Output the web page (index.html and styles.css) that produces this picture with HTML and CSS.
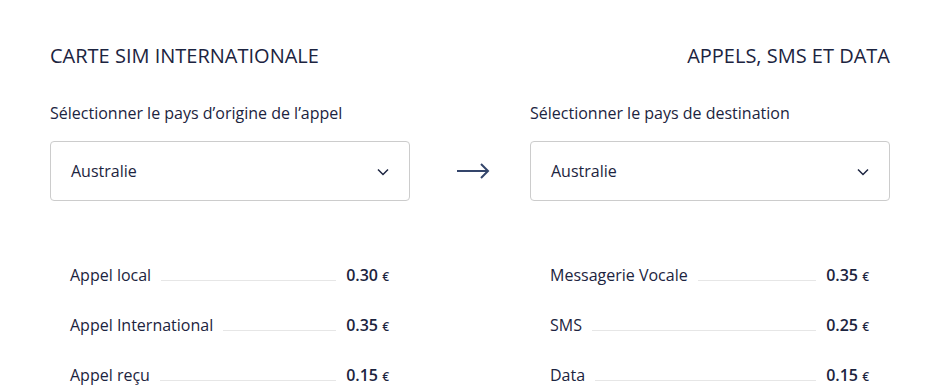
FILE: index.html
```html
<!DOCTYPE html>
<html lang="fr">
<head>
    <meta charset="UTF-8">
    <meta name="viewport" content="width=device-width, initial-scale=1.0">
    <title>Tarifs carte SIM internationale</title>
    <link rel="stylesheet" href="styles.css">
</head>
<body>
    <div class="rates">
        <div class="rates-header">
            <h2 class="rates-title">Carte SIM internationale</h2>
            <h2 class="rates-title">Appels, SMS et data</h2>
        </div>

        <div class="rates-grid">
            <label class="field-label">Sélectionner le pays d’origine de l’appel</label>
            <div></div>
            <label class="field-label">Sélectionner le pays de destination</label>

            <div class="select-box">
                <span>Australie</span>
                <svg class="chevron" width="12" height="8" viewBox="0 0 12 8"><path d="M1 1.5 L6 6.5 L11 1.5" fill="none" stroke="#1c2440" stroke-width="1.5"/></svg>
            </div>
            <div class="arrow">
                <svg width="34" height="16" viewBox="0 0 34 16"><path d="M1 8 H32 M25 1 L32 8 L25 15" fill="none" stroke="#34456b" stroke-width="2"/></svg>
            </div>
            <div class="select-box">
                <span>Australie</span>
                <svg class="chevron" width="12" height="8" viewBox="0 0 12 8"><path d="M1 1.5 L6 6.5 L11 1.5" fill="none" stroke="#1c2440" stroke-width="1.5"/></svg>
            </div>

            <ul class="price-list">
                <li class="price-row"><span>Appel local</span><span class="filler"></span><span class="price">0.30 <small>€</small></span></li>
                <li class="price-row"><span>Appel International</span><span class="filler"></span><span class="price">0.35 <small>€</small></span></li>
                <li class="price-row"><span>Appel reçu</span><span class="filler"></span><span class="price">0.15 <small>€</small></span></li>
            </ul>
            <div></div>
            <ul class="price-list">
                <li class="price-row"><span>Messagerie Vocale</span><span class="filler"></span><span class="price">0.35 <small>€</small></span></li>
                <li class="price-row"><span>SMS</span><span class="filler"></span><span class="price">0.25 <small>€</small></span></li>
                <li class="price-row"><span>Data</span><span class="filler"></span><span class="price">0.15 <small>€</small></span></li>
            </ul>
        </div>
    </div>
</body>
</html>
```

FILE: styles.css
```css
body {
    margin: 0;
    background-color: #ffffff;
    color: #1c2440;
    font-family: "Open Sans", Arial, sans-serif;
}
.rates {
    padding: 44px 48px 0 50px;
}
.rates-header {
    display: flex;
    justify-content: space-between;
}
.rates-title {
    margin: 0;
    font-size: 20px;
    font-weight: 400;
    line-height: 24px;
    text-transform: uppercase;
}
.rates-grid {
    display: grid;
    grid-template-columns: 360px 120px 360px;
    margin-top: 35px;
}
.field-label {
    font-size: 16px;
    line-height: 20px;
    margin-bottom: 18px;
}
.select-box {
    height: 58px;
    border: 1px solid #cccccc;
    border-radius: 4px;
    display: flex;
    align-items: center;
    justify-content: space-between;
    padding: 0 20px;
    font-size: 16px;
}
.chevron {
    margin-top: 1px;
}
.arrow {
    display: flex;
    align-items: center;
    justify-content: center;
    padding-left: 6px;
}
.price-list {
    list-style: none;
    margin: 49px 0 0;
    padding: 0 21px 0 20px;
}
.price-row {
    display: flex;
    align-items: baseline;
    height: 50px;
    font-size: 16px;
    line-height: 50px;
}
.filler {
    flex: 1;
    height: 1px;
    background-color: #e6e6e6;
    margin: 0 10px;
}
.price {
    font-weight: 600;
}
.price small {
    font-size: 12px;
}
```
